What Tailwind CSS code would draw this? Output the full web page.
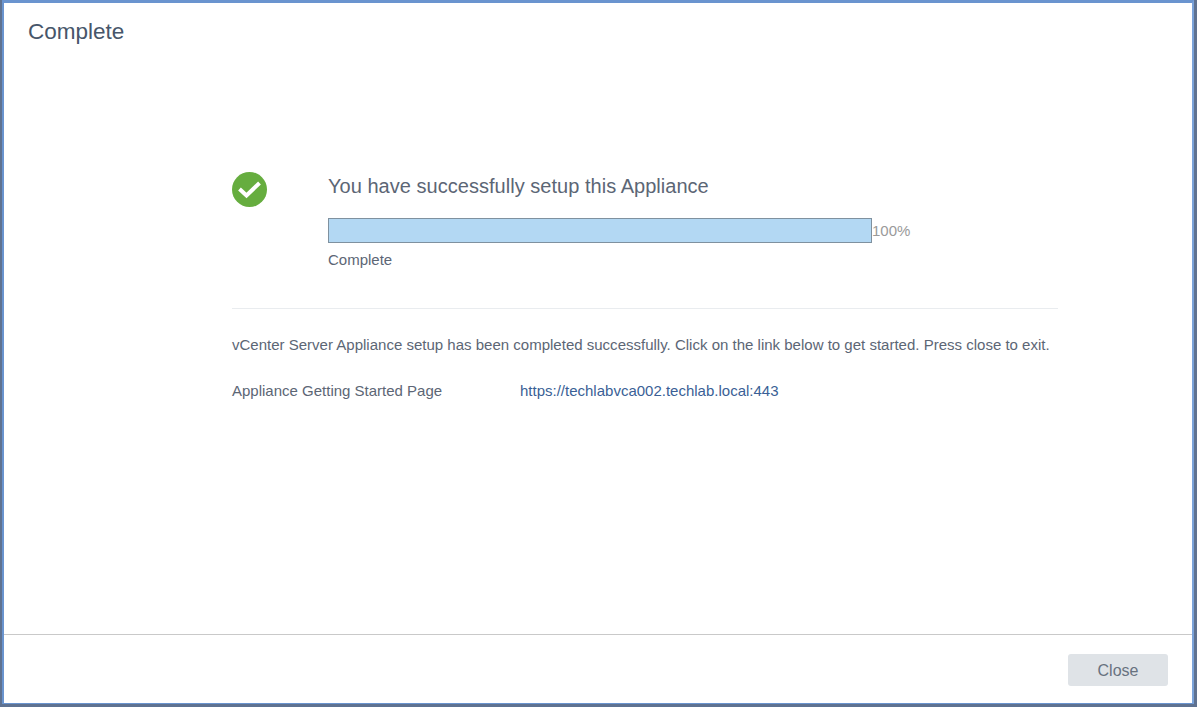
<!DOCTYPE html>
<html lang="en">
<head>
  <meta charset="UTF-8" />
  <title>Complete</title>
  <script src="https://cdn.jsdelivr.net/npm/@tailwindcss/browser@4"></script>
</head>
<body class="bg-[#5f7291] h-[707px] overflow-hidden font-['Liberation_Sans',sans-serif]">
  <div class="h-[707px] pl-[2px] pr-[3px] pb-[3px]">
    <div class="h-full flex flex-col bg-white border-x-2 border-t-[3px] border-b border-[#6a94cf] border-r-[#7ba3da]">
      <header class="h-[52px] pl-[24px] pt-[15px]">
        <h1 class="text-[22.5px] leading-[28px] text-[#47566a]">Complete</h1>
      </header>
      <main class="flex-1 pl-[228px] pr-[134px] pt-[116px]">
        <section class="flex border-b border-[#e9ecef] h-[138px]">
          <svg class="w-[36px] h-[36px] mt-[1px] mr-[60px] shrink-0" viewBox="0 0 36 36">
            <circle cx="17.5" cy="17.5" r="17.5" fill="#66ad3f" />
            <path d="M7.5 17 L14.5 23.5 L27.5 11" fill="none" stroke="#fff" stroke-width="4" />
          </svg>
          <div class="flex-1">
            <p class="text-[20px] leading-[24px] mt-[3px] text-[#5c6675] tracking-[0.03px]">You have successfully setup this Appliance</p>
            <div class="flex items-center mt-[20px] h-[25px]">
              <div class="w-[544px] h-[25px] bg-[#b3d8f3] border border-[#7f919f]"></div>
              <span class="text-[15px] text-[#9a9a9a] pt-[2px]">100%</span>
            </div>
            <p class="text-[15px] leading-[18px] mt-[8px] text-[#5c6675]">Complete</p>
          </div>
        </section>
        <p class="text-[15.02px] leading-[18px] mt-[27px] text-[#5c6675] whitespace-nowrap">vCenter Server Appliance setup has been completed successfully. Click on the link below to get started. Press close to exit.</p>
        <div class="flex mt-[28px] text-[15px] leading-[18px]">
          <span class="w-[288px] text-[#5c6675]">Appliance Getting Started Page</span>
          <a href="#" class="text-[#3a5f96]">https://techlabvca002.techlab.local:443</a>
        </div>
      </main>
      <footer class="h-[69px] border-t border-[#c9c9c9] flex justify-end pt-[19px] pr-[24px]">
        <button class="w-[100px] h-[32px] pt-[1px] rounded-[3px] bg-[#dfe3e7] text-[16px] text-[#68727f]">Close</button>
      </footer>
    </div>
  </div>
</body>
</html>
